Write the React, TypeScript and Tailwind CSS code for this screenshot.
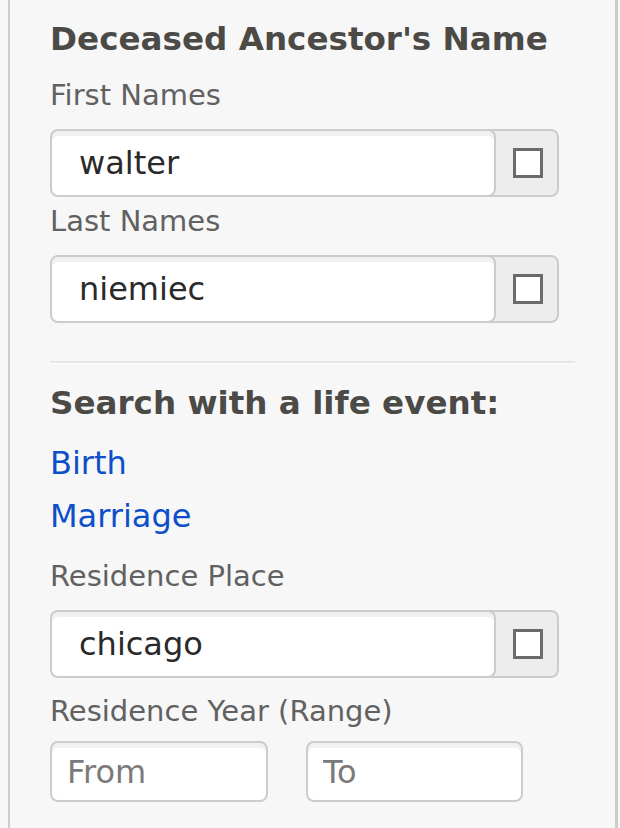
import React from "react";

function TextGroup({ value }: { value: string }) {
  return (
    <div className="flex w-[509px] h-[68px]">
      <input
        readOnly
        value={value}
        className="relative z-10 w-[446px] h-full rounded-[8px] border-2 border-[#cccccc] bg-white pl-[27px] text-[32px] text-[#2a2a2a] shadow-[inset_0_5px_0_0_#f1f1f1] outline-none"
      />
      <div className="-ml-[10px] w-[73px] h-full rounded-r-[8px] border-2 border-[#cccccc] bg-[#ededed] pl-[10px] flex items-center justify-center">
        <span className="block w-[30px] h-[30px] border-[3px] border-[#6b6b6b] bg-white" />
      </div>
    </div>
  );
}

function Label({ children, className = "" }: { children: React.ReactNode; className?: string }) {
  return <div className={"text-[29px] leading-[34px] text-[#616161] " + className}>{children}</div>;
}

export default function App() {
  return (
    <div className="w-[620px] h-[828px] bg-[#f7f7f7] font-['DejaVu_Sans',sans-serif] overflow-hidden">
      <div className="ml-[8px] w-[610px] h-[828px] border-l-2 border-r-[3px] border-[#cccccc] bg-[#f7f7f7] pl-[40px] pr-[40px] pt-[20px]">
        <h2 className="text-[32.6px] leading-[38px] font-bold text-[#4b4a46]">Deceased Ancestor's Name</h2>
        <Label className="mt-[20px]">First Names</Label>
        <div className="mt-[17px]">
          <TextGroup value="walter" />
        </div>
        <Label className="mt-[7px]">Last Names</Label>
        <div className="mt-[17px]">
          <TextGroup value="niemiec" />
        </div>
        <div className="mt-[38px] border-t-2 border-t-[#e6e6e6] border-b border-b-white" />
        <h3 className="mt-[20px] text-[32.6px] leading-[38px] font-bold text-[#4b4a46]">Search with a life event:</h3>
        <a className="block mt-[22px] text-[32px] leading-[38px] text-[#0d4fc8]" href="#">Birth</a>
        <a className="block mt-[15px] text-[32px] leading-[38px] text-[#0d4fc8]" href="#">Marriage</a>
        <Label className="mt-[24px]">Residence Place</Label>
        <div className="mt-[17px]">
          <TextGroup value="chicago" />
        </div>
        <Label className="mt-[16px]">Residence Year (Range)</Label>
        <div className="mt-[13px] flex gap-[38px]">
          <input
            placeholder="From"
            className="w-[218px] h-[61px] rounded-[8px] border-2 border-[#cccccc] bg-white pl-[15px] text-[32px] text-[#2a2a2a] placeholder:text-[#7a7a7a] shadow-[inset_0_5px_0_0_#f1f1f1] outline-none"
          />
          <input
            placeholder="To"
            className="w-[217px] h-[61px] rounded-[8px] border-2 border-[#cccccc] bg-white pl-[15px] text-[32px] text-[#2a2a2a] placeholder:text-[#7a7a7a] shadow-[inset_0_5px_0_0_#f1f1f1] outline-none"
          />
        </div>
      </div>
    </div>
  );
}
